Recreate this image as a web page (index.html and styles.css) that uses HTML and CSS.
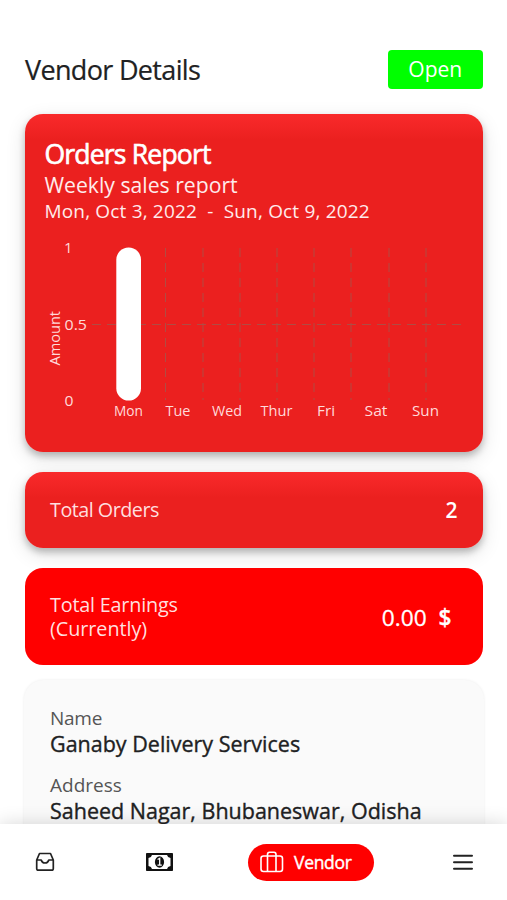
FILE: index.html
```html
<!DOCTYPE html>
<html lang="en">
<head>
<meta charset="utf-8">
<meta name="viewport" content="width=device-width">
<title>Vendor Details</title>
<link rel="stylesheet" href="styles.css">
</head>
<body>
<header class="top">
  <h1 class="title">Vendor Details</h1>
  <button class="status">Open</button>
</header>
<main class="content">
  <section class="card report">
    <h2 class="report-title">Orders Report</h2>
    <p class="report-sub">Weekly sales report</p>
    <p class="report-dates">Mon, Oct 3, 2022&nbsp; -&nbsp; Sun, Oct 9, 2022</p>
    <svg class="chart" width="457" height="196" viewBox="25 235 457 196">
      <g class="grid">
        <path d="M165.5 248V400M203 248V400M240 248V400M277 248V400M314 248V400M351 248V400M389 248V400M426 248V400"/>
        <path d="M92 324.5H463"/>
      </g>
      <rect class="bar" x="116.3" y="247.5" width="24.7" height="153" rx="12.3"/>
      <g class="axis">
        <text x="64" y="252.500">1</text>
        <text x="64.500" y="329.500" textLength="22.500" lengthAdjust="spacingAndGlyphs">0.5</text>
        <text x="64.500" y="406" textLength="9" lengthAdjust="spacingAndGlyphs">0</text>
        <text transform="translate(60 365.500) rotate(-90)" textLength="54.500" lengthAdjust="spacingAndGlyphs">Amount</text>
      </g>
      <g class="days">
        <text x="128.500" y="415.700" textLength="29" lengthAdjust="spacingAndGlyphs">Mon</text>
        <text x="178" y="415.700" textLength="25" lengthAdjust="spacingAndGlyphs">Tue</text>
        <text x="227" y="415.700" textLength="30" lengthAdjust="spacingAndGlyphs">Wed</text>
        <text x="276.500" y="415.700" textLength="32" lengthAdjust="spacingAndGlyphs">Thur</text>
        <text x="326" y="415.700" textLength="18" lengthAdjust="spacingAndGlyphs">Fri</text>
        <text x="376" y="415.700" textLength="23" lengthAdjust="spacingAndGlyphs">Sat</text>
        <text x="425.500" y="415.700" textLength="27" lengthAdjust="spacingAndGlyphs">Sun</text>
      </g>
    </svg>
  </section>
  <section class="card orders">
    <span class="label label-orders">Total Orders</span>
    <span class="count">2</span>
  </section>
  <section class="card earnings">
    <span class="label"><span class="label-top">Total Earnings</span><br><span class="label-note">(Currently)</span></span>
    <span class="amount">0.00&nbsp; <b>$</b></span>
  </section>
  <section class="info">
    <p class="key name-key">Name</p>
    <p class="value name">Ganaby Delivery Services</p>
    <p class="key second">Address</p>
    <p class="value address">Saheed Nagar, Bhubaneswar, Odisha</p>
  </section>
</main>
<nav class="nav">
  <svg class="icon-inbox" width="20" height="20" viewBox="0 0 20 20"><path d="M4.500 1.500H15.500L18.300 8V16.500Q18.300 18.200 16.600 18.200H3.400Q1.700 18.200 1.700 16.500V8ZM1.700 8H6.200Q7 11 10 11T13.800 8H18.300"/></svg>
  <svg class="icon-cash" width="27" height="18" viewBox="0 0 27 18">
    <rect width="27" height="18" rx=".8"/>
    <path class="paper" d="M6 2H21Q21.500 4.500 24.500 5V13Q21.500 13.500 21 16H6Q5.500 13.500 2.500 13V5Q5.500 4.500 6 2Z"/>
    <ellipse cx="13.500" cy="9" rx="4.600" ry="5.800"/>
    <path class="one" d="M11.600 6.500L13.700 5.300V12M11.500 12.200H15.800"/>
  </svg>
  <a class="tab">
    <svg class="icon-case" width="24" height="22" viewBox="0 0 24 22"><rect x="1" y="5" width="21.500" height="15.500" rx="2.500"/><path d="M7.500 20.500V3.500Q7.500 1.200 9.500 1.200H14Q16 1.200 16 3.500V20.500"/></svg>
    <span class="tab-text">Vendor</span>
  </a>
  <svg class="icon-menu" width="20" height="16" viewBox="0 0 20 16"><path d="M1 1.800H19M1 8.300H19M1 14.800H19"/></svg>
</nav>
</body>
</html>
```

FILE: styles.css
```css
* { box-sizing: border-box; }
body {
  margin: 0;
  height: 900px;
  display: flex;
  flex-direction: column;
  overflow: hidden;
  background: #fff;
  color: #202122;
  font-family: "Open Sans", "Noto Sans", sans-serif;
}
h1, h2, p { margin: 0; font-weight: 400; white-space: nowrap; }
.top {
  flex: none;
  height: 113.600px;
  padding: 50px 24.500px 0 25px;
  display: flex;
  justify-content: space-between;
  align-items: flex-start;
}
.title { font-size: 27px; line-height: 39px; letter-spacing: -0.670px; -webkit-text-stroke: 0.200px; }
.status {
  width: 94.500px;
  height: 38.500px;
  padding: 0;
  border: 0;
  border-radius: 4px;
  background: #0f0;
  color: #fff;
  font: 21px/37px "Open Sans", sans-serif;
}
.content {
  flex: 1;
  min-height: 0;
  overflow: hidden;
  padding: 0 24.500px 0 25px;
  margin-top: -30px;
  padding-top: 30px;
}
.card { border-radius: 18px; color: #fff; }
.report, .orders {
  background: linear-gradient(#f92a2b, #eb201f 26px);
  box-shadow: 0 4px 7px rgba(0,0,0,.24), 0 6px 20px rgba(0,0,0,.12);
}
.report { height: 338px; padding-top: 22px; }
.report-title, .report-sub, .report-dates { margin-left: 19.500px; }
.report-title { font-size: 26.500px; line-height: 37px; letter-spacing: -0.800px; -webkit-text-stroke: 0.650px; }
.report-sub { font-size: 21.200px; line-height: 24px; color: #ffebeb; }
.report-dates { font-size: 19px; line-height: 28px; letter-spacing: 0.170px; color: #ffebeb; }
.chart { display: block; margin-top: 10.400px; }
.grid { fill: none; stroke: #b14b43; stroke-width: 1; stroke-dasharray: 9 6; }
.bar { fill: #fff; }
.axis, .days { font-size: 15px; fill: #ffdada; }
.days { text-anchor: middle; }
.orders {
  margin-top: 20px;
  height: 76.500px;
  padding: 0 25px;
  display: flex;
  justify-content: space-between;
  align-items: center;
}
.label { font-size: 19.800px; line-height: 24.500px; color: #ffdfdf; }
.label-orders { letter-spacing: -0.520px; padding-top: 1px; }
.label-top { letter-spacing: -0.200px; }
.label-note { letter-spacing: -0.050px; }
.count { font-size: 21px; font-weight: 600; }
.earnings {
  margin-top: 20px;
  height: 97px;
  padding: 1px 31px 0 25px;
  display: flex;
  justify-content: space-between;
  align-items: center;
  background: #f00;
}
.amount { font-size: 22.700px; -webkit-text-stroke: 0.300px; }
.amount b { font-weight: 600; }
.info {
  margin: 15px -1px 0;
  height: 300px;
  padding: 26px 26px 0;
  border-radius: 20px;
  background: #fafafa;
  box-shadow: 0 0 3px rgba(0,0,0,.08);
}
.key { font-size: 19px; line-height: 25px; color: #555; }
.name-key { letter-spacing: -0.250px; }
.value { font-size: 21.500px; line-height: 27px; margin-top: -1px; -webkit-text-stroke: 0.350px; }
.second { margin-top: 16px; }
.nav {
  flex: none;
  position: relative;
  height: 76px;
  padding: 0 34px 0 35px;
  display: flex;
  align-items: center;
  background: #fff;
  box-shadow: 0 0 18px rgba(0,0,0,.16);
}
.icon-inbox { fill: none; stroke: #222; stroke-width: 1.700; stroke-linejoin: round; }
.icon-cash { margin-left: 91px; fill: #111; }
.paper { fill: #fff; }
.one { fill: none; stroke: #fff; stroke-width: 1.300; }
.tab {
  margin-left: 75px;
  width: 126px;
  height: 37px;
  border-radius: 19px;
  padding-left: 12px;
  display: flex;
  align-items: center;
  background: #f00;
  color: #fff;
}
.icon-case { fill: none; stroke: #fff; stroke-width: 1.600; }
.tab-text { margin-left: 10px; font-size: 17.500px; line-height: 24px; letter-spacing: -0.300px; -webkit-text-stroke: 0.400px; }
.icon-menu { margin-left: auto; stroke: #222; stroke-width: 2; stroke-linecap: round; }
```
